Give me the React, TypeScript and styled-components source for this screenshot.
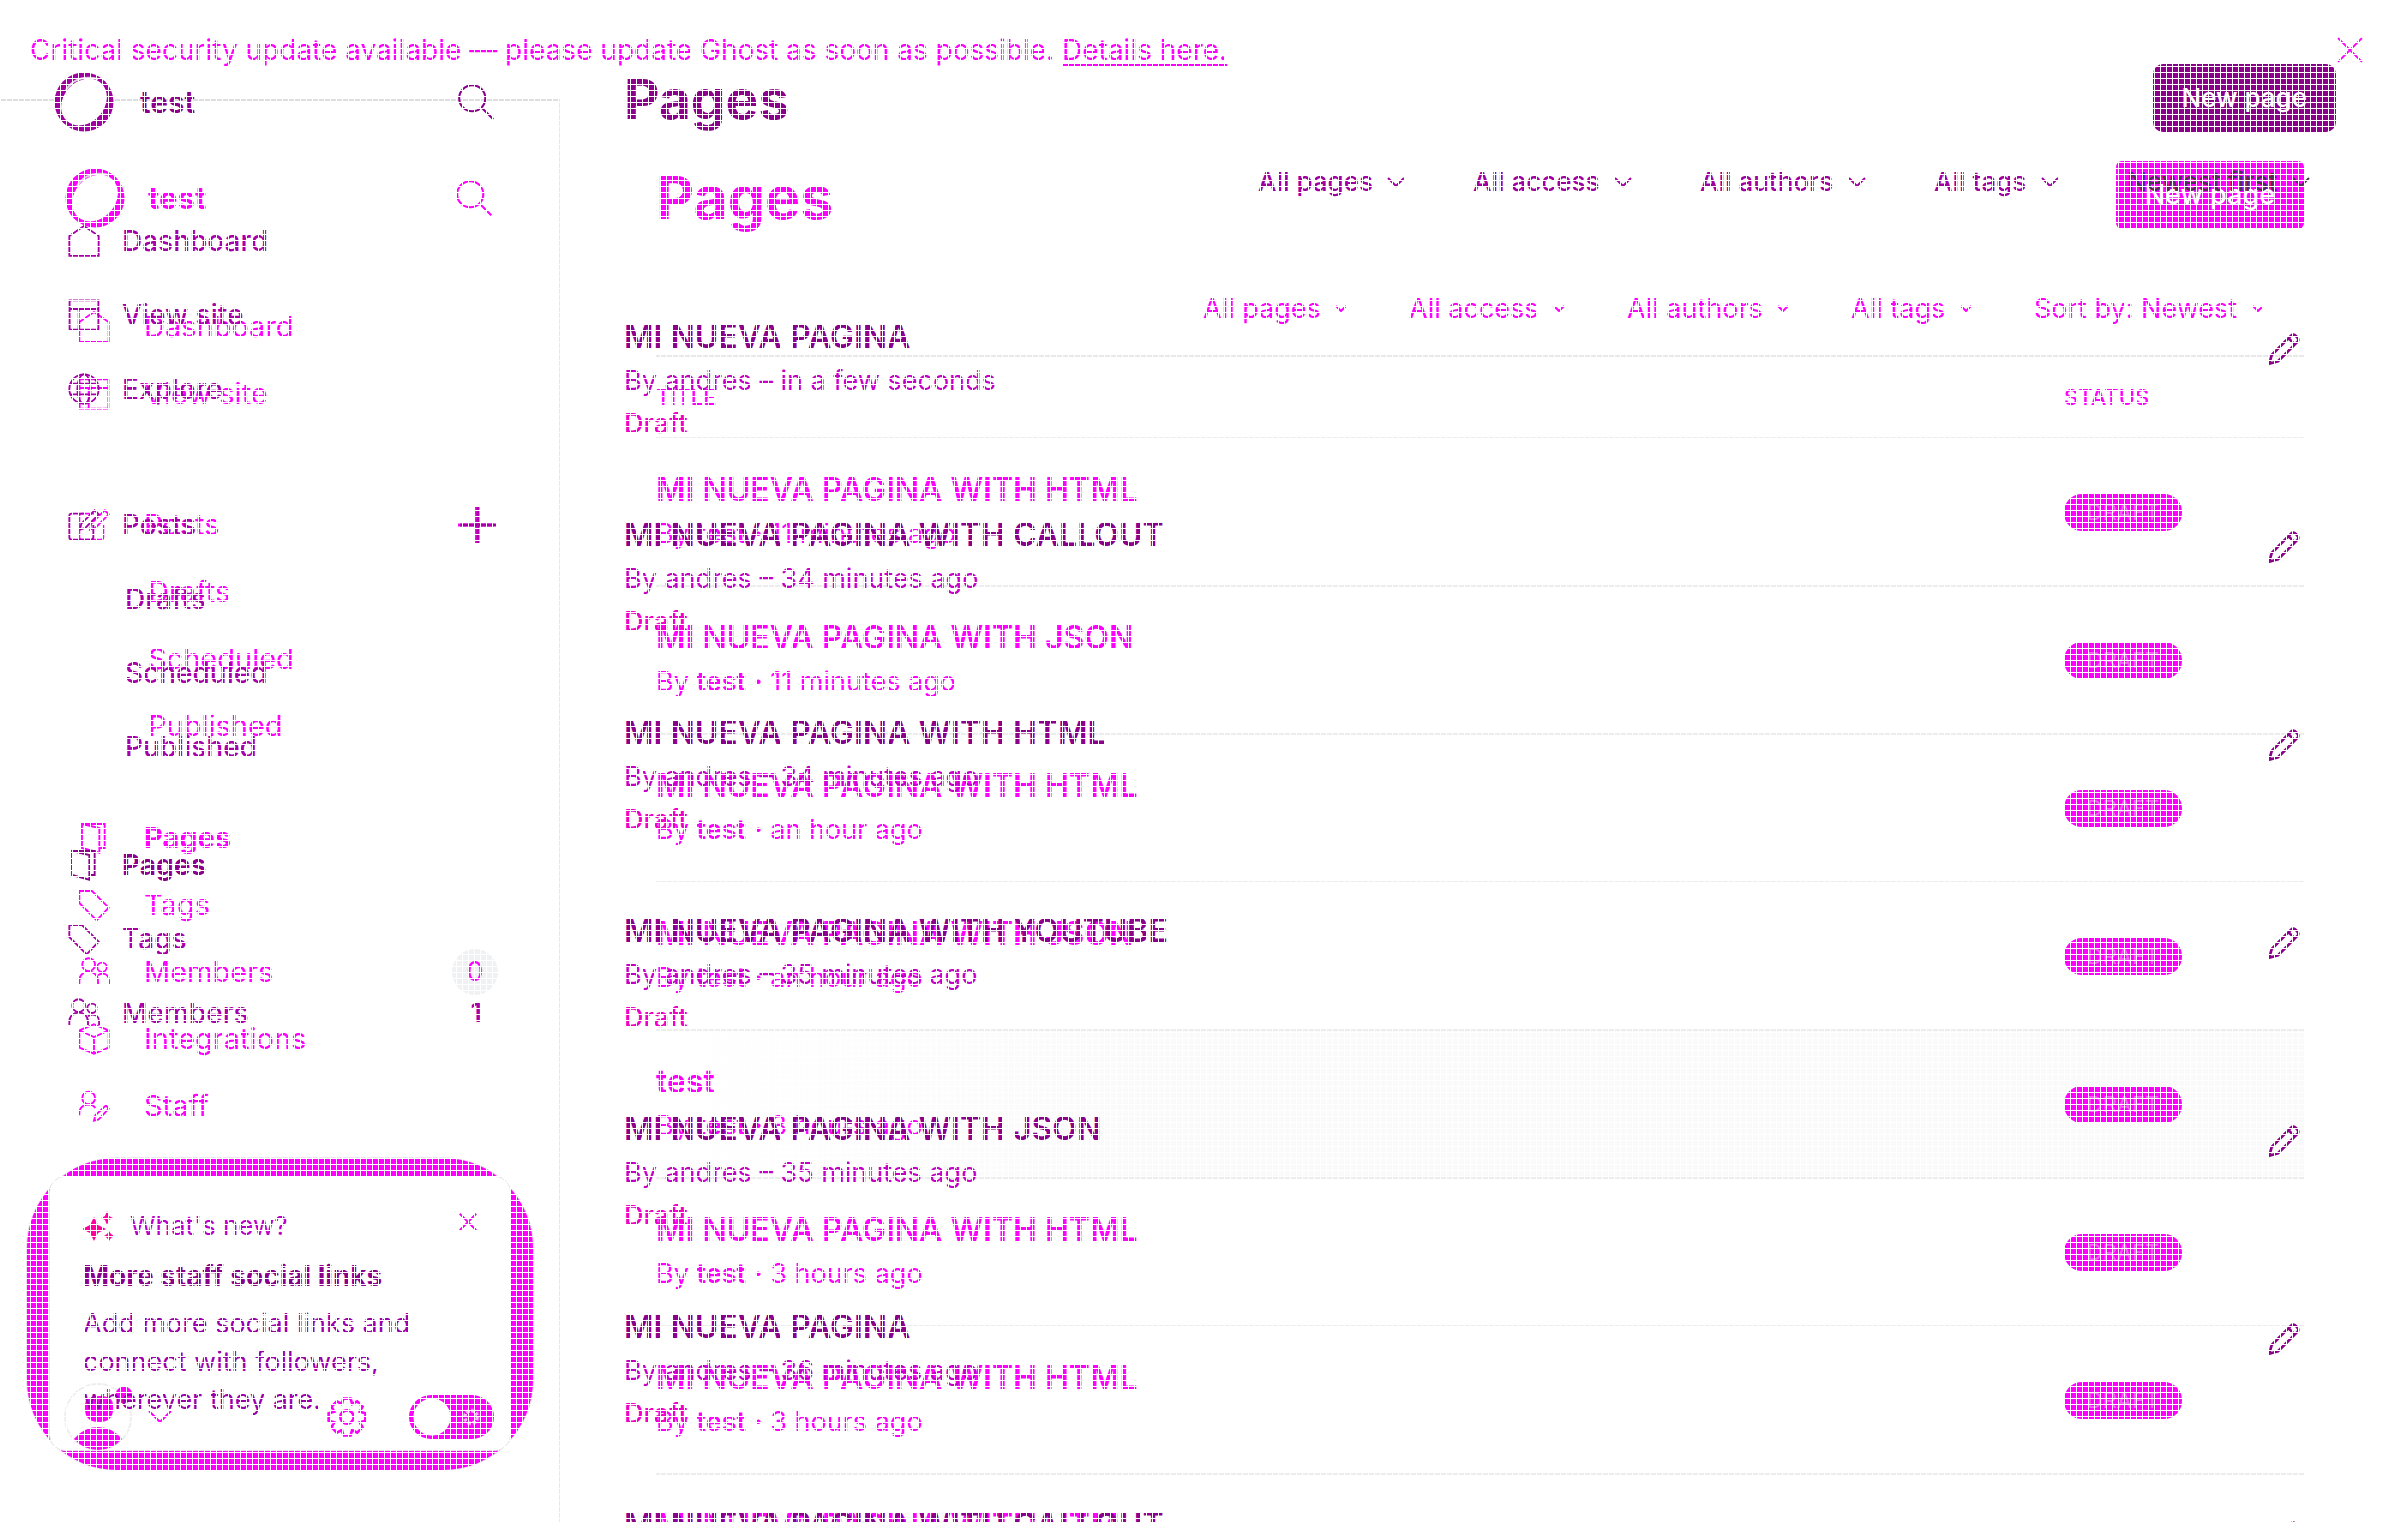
import React from "react";
import styled, { createGlobalStyle } from "styled-components";

const MAGENTA = "#ff00ff";
const PURPLE = "#8b008b";
const NAV_PURPLE = "#a800a8";

const GlobalStyle = createGlobalStyle`
  *, *::before, *::after { box-sizing: border-box; }
  html, body { margin: 0; background: #fff; }
  body { font-family: Inter, "Liberation Sans", sans-serif; font-size: 28px; line-height: 36px; }
  ul { list-style: none; margin: 0; padding: 0; }
  a { color: inherit; text-decoration: none; }
  button, select { font: inherit; color: inherit; background: none; border: 0; padding: 0; margin: 0; }
  h1, h2, h3, p { margin: 0; }
  svg { display: block; flex: none; }
`;

/* Two versions of the admin share one cell, the later one above. */
const Stage = styled.div`
  display: grid;
  grid-template: minmax(0, 1fr) / minmax(0, 1fr);
  height: 100vh;
  overflow: hidden;
`;

const Mesh = styled.div`
  position: fixed;
  inset: 0;
  z-index: 5;
  pointer-events: none;
  background-image: linear-gradient(#fff 1px, transparent 1px),
    linear-gradient(90deg, #fff 1px, transparent 1px);
  background-size: 6px 6px;
`;

const Layer = styled.div<{ $tone: string }>`
  grid-area: 1 / 1;
  display: flex;
  flex-direction: column;
  min-height: 0;
  color: ${(p) => p.$tone};
`;

const Columns = styled.div`
  flex: 1;
  display: flex;
  min-height: 0;
`;

const Banner = styled.div`
  display: flex;
  align-items: center;
  justify-content: space-between;
  height: 99px;
  flex: none;
  padding: 0 37px 0 30px;
  a { text-decoration: underline; text-underline-offset: 4px; }
`;

const Sidebar = styled.aside<{ $lined?: boolean }>`
  width: 560px;
  flex: none;
  display: flex;
  flex-direction: column;
  ${(p) => p.$lined && "border-top: 2px solid #dedede; border-right: 2px solid #e8e8e8;"}
`;

const Brand = styled.div<{ $top: number; $left: number; $gap: number; $weight: number; $size: number }>`
  display: flex;
  align-items: center;
  gap: ${(p) => p.$gap}px;
  height: 60px;
  margin-top: ${(p) => p.$top}px;
  padding: 0 66px 0 ${(p) => p.$left}px;
  font-size: ${(p) => p.$size}px;
  font-weight: ${(p) => p.$weight};
`;

const PushRight = styled.button`
  margin-left: auto;
`;

const Nav = styled.nav<{ $top: number; $gaps: number[]; $tone: string; $size: number; $weight: number }>`
  margin-top: ${(p) => p.$top}px;
  color: ${(p) => p.$tone};
  font-size: ${(p) => p.$size}px;
  font-weight: ${(p) => p.$weight};
  ul + ul { margin-top: ${(p) => p.$gaps[0]}px; }
  ul + ul + ul { margin-top: ${(p) => p.$gaps[1]}px; }
`;

const NavRow = styled.li<{ $height: number; $left: number; $gap: number; $active?: boolean; $activeTone: string }>`
  display: flex;
  align-items: center;
  height: ${(p) => p.$height}px;
  padding: 0 64px 0 ${(p) => p.$left}px;
  a { display: flex; align-items: center; gap: ${(p) => p.$gap}px; }
  ${(p) => p.$active && `color: ${p.$activeTone}; font-weight: 700;`}
`;

const Count = styled.span`
  margin: 0 14px 0 auto;
  font-size: 27px;
  font-weight: 600;
`;

const Badge = styled.span`
  margin: 0 -4px 0 auto;
  width: 46px;
  height: 46px;
  border-radius: 50%;
  background: #eff1f3;
  display: grid;
  place-items: center;
  font-size: 27px;
`;

const Main = styled.main<{ $pad: string }>`
  flex: 1;
  min-width: 0;
  padding: ${(p) => p.$pad};
`;

const Header = styled.header<{ $size: number; $line: number }>`
  display: flex;
  align-items: center;
  justify-content: space-between;
  height: 68px;
  h1 { font-size: ${(p) => p.$size}px; line-height: 68px; padding-top: ${(p) => p.$line}px; font-weight: 700; }
`;

const Primary = styled.button<{ $tone: string; $radius: number; $size: number; $pad: number }>`
  && {
    height: 68px;
    padding: 0 ${(p) => p.$pad}px;
    border-radius: ${(p) => p.$radius}px;
    background: ${(p) => p.$tone};
    color: #fff;
    font-size: ${(p) => p.$size}px;
    font-weight: 500;
  }
`;

const Filters = styled.div<{ $gap: number; $top: number; $pad: number; $size: number; $weight: number; $tone: string }>`
  display: flex;
  justify-content: flex-end;
  gap: ${(p) => p.$gap}px;
  margin-top: ${(p) => p.$top}px;
  padding-right: ${(p) => p.$pad}px;
  font-size: ${(p) => p.$size}px;
  font-weight: ${(p) => p.$weight};
  color: ${(p) => p.$tone};
`;

const Filter = styled.label<{ $tone?: string }>`
  display: flex;
  align-items: center;
  gap: 14px;
  height: 36px;
  color: ${(p) => p.$tone ?? "inherit"};
  select { appearance: none; height: 36px; line-height: 36px; }
`;

const Table = styled.table`
  width: 100%;
  margin-top: 28px;
  border-collapse: separate;
  border-spacing: 0;
  border-top: 2px solid #e9e9e9;
  th, td { padding: 0; text-align: left; border-bottom: 2px solid #ededed; }
  th { height: 82px; font-size: 22px; font-weight: 500; text-transform: uppercase; }
  th:last-child { width: 240px; }
  td { height: 148px; }
`;

const BodyRow = styled.tr<{ $hover?: boolean }>`
  ${(p) => p.$hover && "background: linear-gradient(90deg, #fff, #fafafa 30%);"}
`;

const RowTitle = styled.h3`
  font-size: 32px;
  line-height: 44px;
  font-weight: 600;
`;

const Byline = styled.p<{ $tone?: string }>`
  font-size: 27px;
  line-height: 44px;
  color: ${(p) => p.$tone ?? "inherit"};
  b { font-weight: 600; }
  strong { font-weight: 700; }
`;

const Pill = styled.span`
  display: flex;
  align-items: center;
  justify-content: center;
  width: 118px;
  height: 37px;
  border-radius: 18px;
  background: ${MAGENTA};
  color: #ff5cff;
  font-size: 22px;
  text-transform: uppercase;
`;

const PostList = styled.ul`
  margin-top: 115px;
`;

const PostItem = styled.li`
  display: flex;
  justify-content: space-between;
  height: 198px;
  padding-right: 36px;
  button { align-self: flex-start; margin-top: 18px; }
`;

const Draft = styled.p`
  font-size: 27px;
  line-height: 42px;
  font-weight: 500;
  color: #f000c8;
`;

const Footer = styled.div`
  position: relative;
  z-index: 1;
  display: flex;
  align-items: center;
  margin: auto 64px 71px 64px;
  height: 68px;
`;

const UserButton = styled.button`
  display: flex;
  align-items: center;
  gap: 16px;
`;

const Gear = styled.button`
  margin: 0 42px 0 auto;
`;

const Toggle = styled.input`
  appearance: none;
  margin: 0;
  width: 85px;
  height: 44px;
  border-radius: 22px;
  background: radial-gradient(circle at 23px 22px, #fff 18px, transparent 19px),
    repeating-conic-gradient(from 0deg at 62px 22px, transparent 0 30deg, ${MAGENTA} 30deg 45deg),
    radial-gradient(circle at 62px 22px, ${MAGENTA} 4px, #ffb0ff 5px, #ffb0ff 7px, ${MAGENTA} 9px);
`;

const Halo = styled.section`
  margin: auto 27px 52px 27px;
  padding: 18px 22px 19px 22px;
  border-radius: 90px;
  background: ${MAGENTA};
  box-shadow: 0 0 0 1px #eee0ee;
`;

const Card = styled.div`
  height: 275px;
  padding: 30px 33px 0;
  border-radius: 16px;
  border: 1px solid #e4e4e4;
  background: #fff;
  color: ${PURPLE};
`;

const CardText = styled.div`
  position: relative;
  z-index: 2;
`;

const CardHead = styled.div`
  display: flex;
  align-items: center;
  gap: 17px;
  height: 38px;
  font-size: 26px;
  color: #b800c8;
  button { margin: -8px 0 0 auto; color: #f000f0; }
`;

const CardTitle = styled.h2`
  margin-top: 12px;
  font-size: 28px;
  line-height: 38px;
  font-weight: 700;
`;

const CardBody = styled.p`
  margin-top: 10px;
  font-size: 27px;
  line-height: 38px;
  color: #9a00aa;
`;

const PATHS: Record<string, React.ReactNode> = {
  home: <path d="M1 8.2 12 .8l11 7.4V23.2H1Z" />,
  site: <path d="M1.2 1h21.6v22H1.2ZM1.2 7.5h21.6M8 7.5V23" />,
  globe: (
    <>
      <circle cx="12" cy="12" r="11" />
      <ellipse cx="12" cy="12" rx="5" ry="11" />
      <path d="M2 8h20M2 16h20" />
    </>
  ),
  edit: (
    <path d="M12 3.5H2.8Q1 3.5 1 5.300V21.200Q1 23 2.800 23H17.200Q19 23 19 21.200V12M9 15.500l1-4.500L20 1l3 3L13 14.200Z" />
  ),
  pages: <path d="M3 1.500h17v18h-4M3 1.500l13 3v18.500L3 19.500Z" />,
  tag: <path d="M1 1.500h9.500L23 14 14 23.500 1 10.500Z" />,
  members: (
    <>
      <circle cx="8" cy="6.500" r="4.800" />
      <circle cx="18" cy="8.500" r="3.500" />
      <path d="M1 21v-2.500c0-9 14-9 14 0V21M15 14.500c4-3 8.300-.5 8.300 4V21" />
    </>
  ),
  box: <path d="M12 1 23 5.500v13L12 23 1 18.500v-13ZM1 5.500l11 5 11-5M12 10.500V23" />,
  staff: (
    <>
      <circle cx="8" cy="6" r="4.800" />
      <path d="M1 19v-1.500c0-7 9-8.500 12-4M12 23l1-4 8-7.500 2 2.500-7.500 8Z" />
    </>
  ),
  search: (
    <>
      <circle cx="9.500" cy="9.500" r="8.700" />
      <path d="m16 16 7.500 7.500" />
    </>
  ),
  plus: <path d="M12 0v24M0 12h24" />,
  close: <path d="m1 1 22 22M23 1 1 23" />,
  pencil: <path d="M1 23l1.800-6.500L17.500 1.800c2-2 6.700 2.700 4.700 4.700L7.500 21.200ZM15.500 4l4.700 4.700" />,
  gear: (
    <>
      <circle cx="12" cy="12" r="4" />
      <path d="M9.800 1h4.400l.9 3.200 3-1.600 3.200 3.200-1.600 3 3.300.9v4.600l-3.300.9 1.600 3-3.200 3.200-3-1.600-.9 3.200H9.800l-.9-3.200-3 1.600-3.200-3.200 1.600-3L1 14.300V9.700l3.300-.9-1.600-3 3.200-3.200 3 1.600Z" />
    </>
  ),
};

function Icon({ name, size = 32, stroke = 1.4 }: { name: string; size?: number; stroke?: number }) {
  return (
    <svg width={size} height={size} viewBox="0 0 24 24" fill="none" stroke="currentColor" strokeWidth={stroke} aria-hidden>
      {PATHS[name]}
    </svg>
  );
}

function Chevron({ width, stroke }: { width: number; stroke: number }) {
  const h = width / 2 + 2;
  return (
    <svg width={width} height={h} fill="none" stroke="currentColor" strokeWidth={stroke} aria-hidden>
      <path d={`M1 1 L${width / 2} ${h - 2} L${width - 1} 1`} />
    </svg>
  );
}

function Orb({ tone }: { tone: string }) {
  return (
    <svg width="60" height="60" viewBox="0 0 60 60" aria-hidden>
      <circle cx="30" cy="30" r="29.500" fill={tone} />
      <ellipse cx="30" cy="30" rx="25.500" ry="20.500" fill="#fff" transform="rotate(-48 30 30)" />
      <path d="M12 18Q22 2 44 7" fill="none" stroke="#e4d0e4" strokeWidth="2" />
    </svg>
  );
}

type Item = { icon?: string; text: string; active?: boolean; extra?: React.ReactNode };

const plusButton = (
  <PushRight aria-label="New post">
    <Icon name="plus" size={36} stroke={2} />
  </PushRight>
);

const subItems: Item[] = [{ text: "Drafts" }, { text: "Scheduled" }, { text: "Published" }];

const currentNav: Item[][] = [
  [
    { icon: "home", text: "Dashboard" },
    { icon: "site", text: "View site" },
    { icon: "globe", text: "Explore" },
  ],
  [{ icon: "edit", text: "Posts", extra: plusButton }, ...subItems],
  [
    { icon: "pages", text: "Pages", active: true },
    { icon: "tag", text: "Tags" },
    { icon: "members", text: "Members", extra: <Count>1</Count> },
  ],
];

const earlierNav: Item[][] = [
  [
    { icon: "home", text: "Dashboard" },
    { icon: "site", text: "View site" },
  ],
  [{ icon: "edit", text: "Posts", extra: plusButton }, ...subItems],
  [
    { icon: "pages", text: "Pages", active: true },
    { icon: "tag", text: "Tags" },
    { icon: "members", text: "Members", extra: <Badge>0</Badge> },
    { icon: "box", text: "Integrations" },
    { icon: "staff", text: "Staff" },
  ],
];

function NavGroups({ groups, height, left, subLeft, gap, activeTone }: {
  groups: Item[][]; height: number; left: number; subLeft: number; gap: number; activeTone: string;
}) {
  return (
    <>
      {groups.map((group, i) => (
        <ul key={i}>
          {group.map((item) => (
            <NavRow
              key={item.text}
              $height={height}
              $left={item.icon ? left : subLeft}
              $gap={gap}
              $active={item.active}
              $activeTone={activeTone}
            >
              <a href="#">
                {item.icon && <Icon name={item.icon} />}
                {item.text}
              </a>
              {item.extra}
            </NavRow>
          ))}
        </ul>
      ))}
    </>
  );
}

const tablePages = [
  ["MI NUEVA PAGINA WITH HTML", "11 minutes ago"],
  ["MI NUEVA PAGINA WITH JSON", "11 minutes ago"],
  ["MI NUEVA PAGINA WITH HTML", "an hour ago"],
  ["MI NUEVA PAGINA WITH JSON", "an hour ago"],
  ["test", "3 hours ago"],
  ["MI NUEVA PAGINA WITH HTML", "3 hours ago"],
  ["MI NUEVA PAGINA WITH HTML", "3 hours ago"],
  ["MI NUEVA PAGINA WITH HTML", "3 hours ago"],
];

const listPages = [
  ["MI NUEVA PAGINA", "in a few seconds"],
  ["MI NUEVA PAGINA WITH CALLOUT", "34 minutes ago"],
  ["MI NUEVA PAGINA WITH HTML", "34 minutes ago"],
  ["MI NUEVA PAGINA WITH YOUTUBE", "35 minutes ago"],
  ["MI NUEVA PAGINA WITH JSON", "35 minutes ago"],
  ["MI NUEVA PAGINA", "36 minutes ago"],
  ["MI NUEVA PAGINA WITH CALLOUT", "36 minutes ago"],
];

function FilterSelect({ text, chevron, stroke, tone }: { text: string; chevron: number; stroke: number; tone?: string }) {
  return (
    <Filter $tone={tone}>
      <select aria-label={text}>
        <option>{text}</option>
      </select>
      <Chevron width={chevron} stroke={stroke} />
    </Filter>
  );
}

const filterNames = ["All pages", "All access", "All authors", "All tags"];

function EarlierAdmin() {
  return (
    <Layer $tone={MAGENTA}>
      <Banner>
        <p>
          Critical security update available — please update Ghost as soon as possible.{" "}
          <a href="#">Details here.</a>
        </p>
        <button aria-label="Dismiss">
          <Icon name="close" size={26} stroke={1.8} />
        </button>
      </Banner>
      <Columns>
        <Sidebar $lined>
          <Brand $top={67} $left={65} $gap={23} $weight={700} $size={31}>
            <Orb tone={MAGENTA} />
            test
            <PushRight aria-label="Search">
              <Icon name="search" size={36} />
            </PushRight>
          </Brand>
          <Nav $top={65} $gaps={[64, 45]} $tone={MAGENTA} $size={29} $weight={400}>
            <NavGroups groups={earlierNav} height={67} left={78} subLeft={148} gap={34} activeTone={MAGENTA} />
          </Nav>
          <Footer>
            <UserButton aria-label="Account">
              <svg width="68" height="68" aria-hidden>
                <circle cx="34" cy="34" r="33" fill="none" stroke="#eee" strokeWidth="2" />
                <path d="M21 22q0-9 14-9t14 9v4q0 13-14 13T21 26Z" fill={MAGENTA} />
                <path d="M10 56q10-12 24-12t24 12q-10 11-24 11T10 56Z" fill={MAGENTA} />
                <circle cx="60" cy="12" r="8.500" fill={MAGENTA} />
              </svg>
              <Chevron width={24} stroke={2} />
            </UserButton>
            <Gear aria-label="Settings">
              <Icon name="gear" size={40} stroke={1.6} />
            </Gear>
            <Toggle type="checkbox" aria-label="Night shift" />
          </Footer>
        </Sidebar>
        <Main $pad="62px 96px 0 96px">
          <Header $size={59} $line={5}>
            <h1>Pages</h1>
            <Primary $tone={MAGENTA} $radius={6} $size={27} $pad={29}>New page</Primary>
          </Header>
          <Filters $gap={62} $top={62} $pad={40} $size={27} $weight={400} $tone={MAGENTA}>
            {[...filterNames, "Sort by: Newest"].map((t) => (
              <FilterSelect key={t} text={t} chevron={12} stroke={2} />
            ))}
          </Filters>
          <Table>
            <thead>
              <tr>
                <th scope="col">Title</th>
                <th scope="col">Status</th>
              </tr>
            </thead>
            <tbody>
              {tablePages.map(([title, time], i) => (
                <BodyRow key={i} $hover={i === 4}>
                  <td>
                    <RowTitle>{title}</RowTitle>
                    <Byline>
                      By <b>test</b> <strong>·</strong> {time}
                    </Byline>
                  </td>
                  <td>
                    <Pill>Draft</Pill>
                  </td>
                </BodyRow>
              ))}
            </tbody>
          </Table>
        </Main>
      </Columns>
    </Layer>
  );
}

function CurrentAdmin() {
  return (
    <Layer $tone={PURPLE}>
      <Columns>
        <Sidebar>
          <Brand $top={72} $left={54} $gap={26} $weight={600} $size={30}>
            <Orb tone="#a000a0" />
            test
            <PushRight aria-label="Search">
              <Icon name="search" size={36} />
            </PushRight>
          </Brand>
          <Nav $top={72} $gaps={[62, 44]} $tone={NAV_PURPLE} $size={28} $weight={500}>
            <NavGroups groups={currentNav} height={74} left={68} subLeft={125} gap={22} activeTone={PURPLE} />
          </Nav>
          <Halo>
            <Card>
              <CardText>
                <CardHead>
                  <svg width="30" height="30" fill="#ff00a0" aria-hidden>
                    <path d="M11 6l4 8 8 4-8 4-4 8-4-8-8-4 8-4ZM24 0l2 5 4 2-4 2-2 5-2-5-4-2 4-2ZM26 20l2 3 3 2-3 2-2 3-2-3-3-2 3-2Z" />
                  </svg>
                  What's new?
                  <button aria-label="Close">
                    <Icon name="close" size={18} stroke={2.4} />
                  </button>
                </CardHead>
                <CardTitle>More staff social links</CardTitle>
                <CardBody>Add more social links and connect with followers, wherever they are.</CardBody>
              </CardText>
            </Card>
          </Halo>
        </Sidebar>
        <Main $pad="64px 64px 0 64px">
          <Header $size={55} $line={2}>
            <h1>Pages</h1>
            <Primary $tone={PURPLE} $radius={10} $size={26} $pad={29}>New page</Primary>
          </Header>
          <Filters $gap={68} $top={32} $pad={26} $size={26} $weight={500} $tone="#a000a0">
            {filterNames.map((t) => (
              <FilterSelect key={t} text={t} chevron={18} stroke={2} />
            ))}
            <FilterSelect text="Newest first" chevron={18} stroke={2} tone="#503050" />
          </Filters>
          <PostList>
            {listPages.map(([title, time], i) => (
              <PostItem key={i}>
                <div>
                  <RowTitle>{title}</RowTitle>
                  <Byline $tone="#c400c8">By andres – {time}</Byline>
                  <Draft>Draft</Draft>
                </div>
                <button aria-label={`Edit ${title}`}>
                  <Icon name="pencil" size={32} stroke={2} />
                </button>
              </PostItem>
            ))}
          </PostList>
        </Main>
      </Columns>
    </Layer>
  );
}

export default function App() {
  return (
    <>
      <GlobalStyle />
      <Stage>
        <EarlierAdmin />
        <CurrentAdmin />
      </Stage>
      <Mesh />
    </>
  );
}
